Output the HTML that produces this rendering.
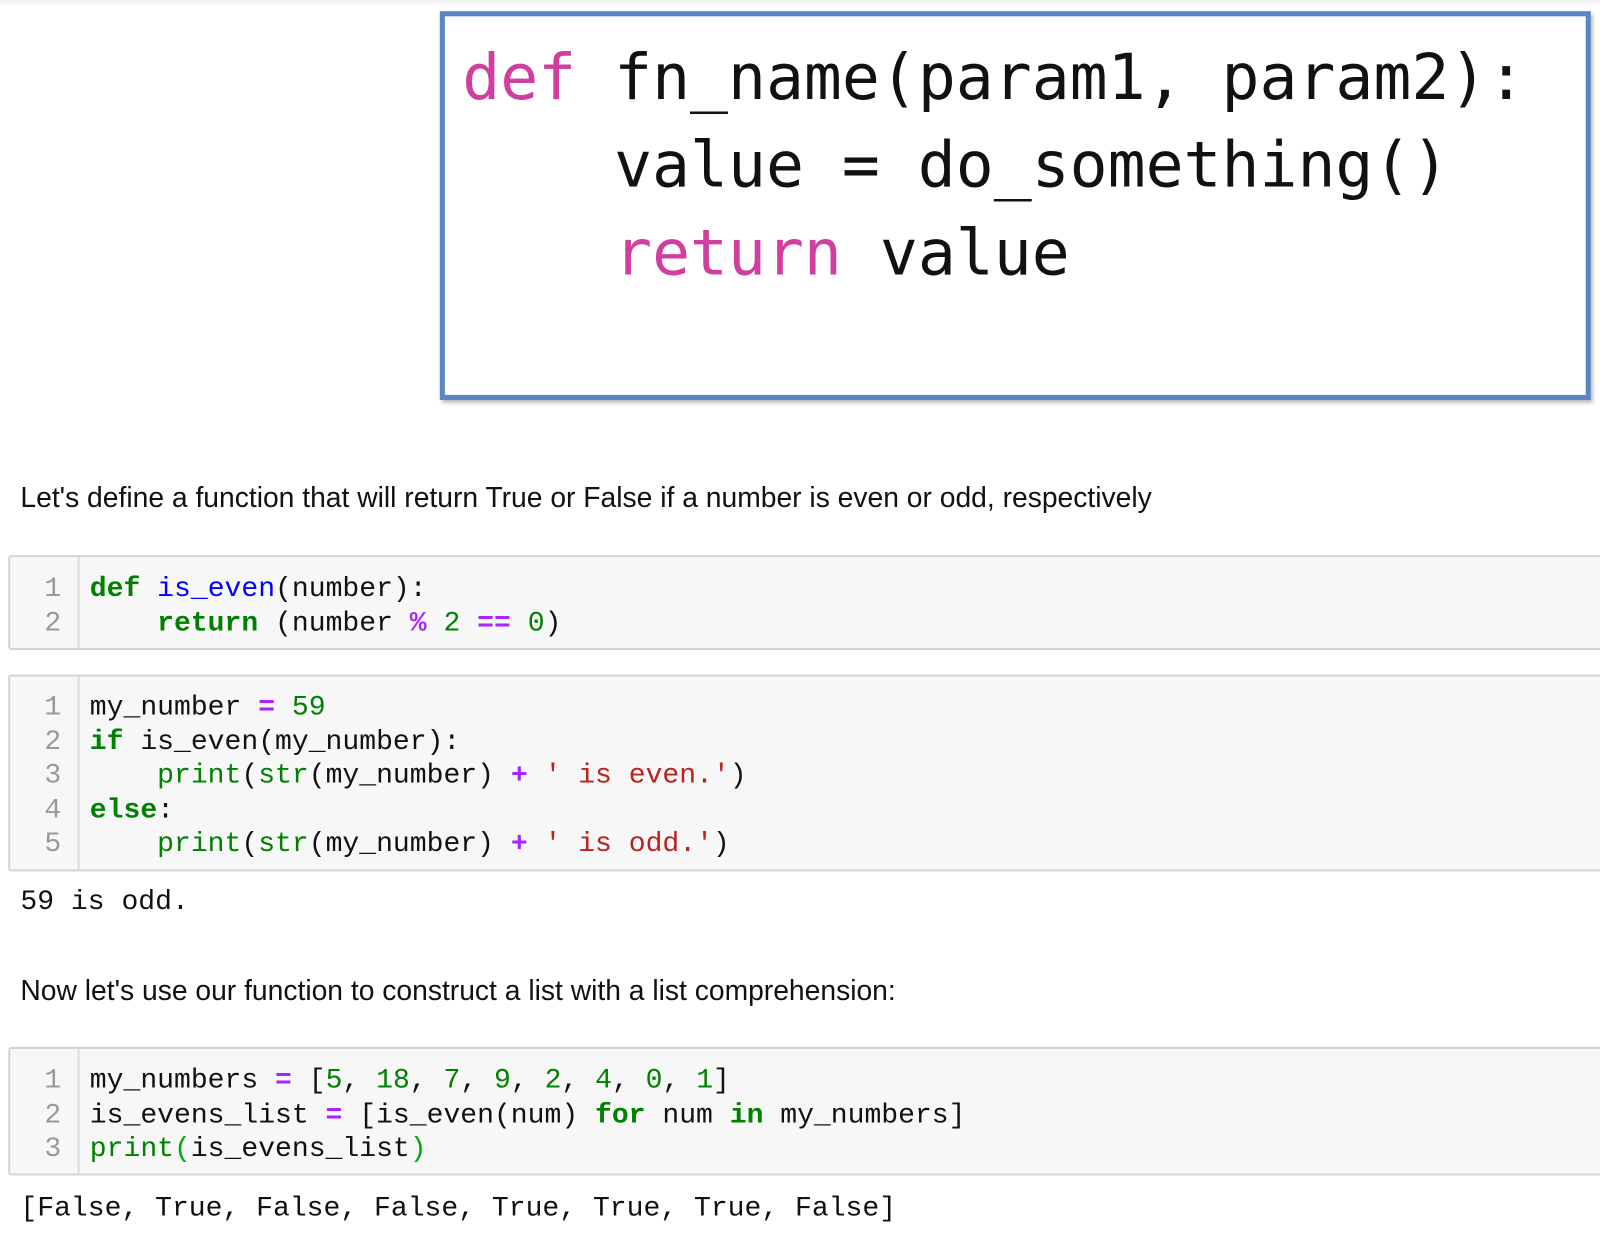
<!DOCTYPE html>
<html><head><meta charset="utf-8"><style>
body{margin:0;width:1600px;height:1230px;background:#fff;position:relative;overflow:hidden;font-family:"Liberation Sans",sans-serif}
#w{position:absolute;left:0;top:0;width:1600px;height:1230px;transform:scale(1.0204);transform-origin:0 0}
.top{position:absolute;left:0;top:0;width:1600px;height:6px;background:linear-gradient(#eee,#fff)}
.box{position:absolute;left:431px;top:11px;width:1118px;height:371px;border:5px solid #5b86c2;box-shadow:2px 3px 4px rgba(0,0,0,.3);background:#fff}
.big{position:absolute;font-family:"DejaVu Sans Mono",monospace;font-size:61.8px;line-height:86px;color:#111;white-space:pre}
.pk{color:#d03ea0}
.p{position:absolute;left:20px;font-size:27.7px;color:#111;white-space:nowrap}
.cell{position:absolute;left:8px;width:1600px;background:#f7f7f7;border:2px solid #d4d4d4;border-radius:3px;box-sizing:border-box}
.gut{position:absolute;left:0;top:0;bottom:0;width:66px;border-right:2px solid #ddd}
pre{margin:0;font-family:"Liberation Mono",monospace;font-size:27.5px;line-height:33.6px;white-space:pre}
.ln{position:absolute;left:0;width:50px;text-align:right;color:#999}
.code{position:absolute;left:78px;color:#111}
.k{color:#008000;font-weight:bold}.f{color:#0000ff}.o{color:#aa22ff;font-weight:bold}.n{color:#008000}.s{color:#ba2121}.b{color:#008000}.bp{color:#00aa00}
.out{position:absolute;left:20px;color:#111}
</style></head><body><div id="w">
<div class="top"></div>
<div class="box"></div>
<div class="big" style="left:453px;top:33px"><span class="pk">def</span> fn_name(param1, param2):
    value = do_something()
    <span class="pk">return</span> value</div>
<div class="p" style="top:472px">Let's define a function that will return True or False if a number is even or odd, respectively</div>
<div class="cell" style="top:544px;height:93px"><div class="gut"></div>
<pre class="ln" style="top:15px">1
2</pre>
<pre class="code" style="top:15px"><span class="k">def</span> <span class="f">is_even</span>(number):
    <span class="k">return</span> (number <span class="o">%</span> <span class="n">2</span> <span class="o">==</span> <span class="n">0</span>)</pre></div>
<div class="cell" style="top:661px;height:193px"><div class="gut"></div>
<pre class="ln" style="top:14px">1
2
3
4
5</pre>
<pre class="code" style="top:14px">my_number <span class="o">=</span> <span class="n">59</span>
<span class="k">if</span> is_even(my_number):
    <span class="b">print</span>(<span class="b">str</span>(my_number) <span class="o">+</span> <span class="s">' is even.'</span>)
<span class="k">else</span>:
    <span class="b">print</span>(<span class="b">str</span>(my_number) <span class="o">+</span> <span class="s">' is odd.'</span>)</pre></div>
<pre class="out" style="top:868px">59 is odd.</pre>
<div class="p" style="top:955px">Now let's use our function to construct a list with a list comprehension:</div>
<div class="cell" style="top:1026px;height:126px"><div class="gut"></div>
<pre class="ln" style="top:15px">1
2
3</pre>
<pre class="code" style="top:15px">my_numbers <span class="o">=</span> [<span class="n">5</span>, <span class="n">18</span>, <span class="n">7</span>, <span class="n">9</span>, <span class="n">2</span>, <span class="n">4</span>, <span class="n">0</span>, <span class="n">1</span>]
is_evens_list <span class="o">=</span> [is_even(num) <span class="k">for</span> num <span class="k">in</span> my_numbers]
<span class="b">print</span><span class="bp">(</span>is_evens_list<span class="bp">)</span></pre></div>
<pre class="out" style="top:1168px">[False, True, False, False, True, True, True, False]</pre>
</div></body></html>
